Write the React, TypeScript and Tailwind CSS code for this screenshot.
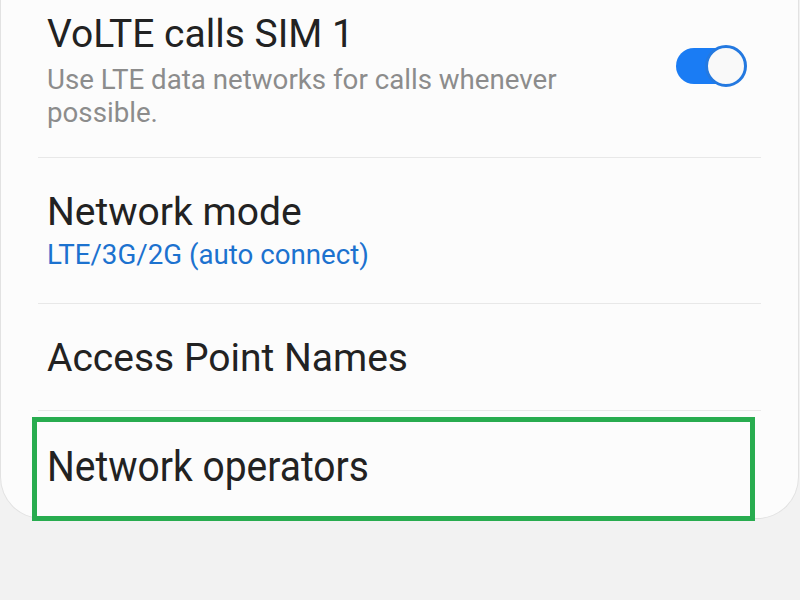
// Mobile network settings list with the last row highlighted
const font = { fontFamily: "Roboto, 'Noto Sans', sans-serif" };

function Toggle() {
  return (
    <div className="relative mt-[34px] h-[42px] w-[71px] shrink-0">
      <div className="absolute left-0 top-[3px] h-[36px] w-[60px] rounded-full bg-[#1a7cf4]" />
      <div className="absolute right-0 top-0 h-[42px] w-[42px] rounded-full border-[3px] border-[#2479e0] bg-[#f9f9f9]" />
    </div>
  );
}

export default function App() {
  return (
    <div className="relative h-[600px] w-[800px] overflow-hidden bg-[#f2f2f2]" style={font}>
      <div className="w-[799px] rounded-b-[42px] border border-t-0 border-[#e2e2e2] bg-[#fcfcfc] px-[37px]">
        {/* VoLTE */}
        <div className="flex items-start border-b border-[#e8e8e8] pb-[28px] pl-[9px] pr-[14px] pt-[11px]">
          <div className="w-[560px]">
            <p className="text-[39px] leading-[46px] text-[#222]">VoLTE calls SIM 1</p>
            <p className="mt-[6px] text-[27.7px] leading-[33px] text-[#8c8c8c]">
              Use LTE data networks for calls whenever possible.
            </p>
          </div>
          <div className="ml-auto">
            <Toggle />
          </div>
        </div>

        {/* network mode */}
        <div className="border-b border-[#e8e8e8] pb-[32px] pl-[9px] pt-[31px]">
          <p className="text-[39px] leading-[46px] text-[#222]">Network mode</p>
          <p className="mt-[3px] text-[27.7px] leading-[33px] text-[#1c72cf]">LTE/3G/2G (auto connect)</p>
        </div>

        {/* APN */}
        <div className="border-b border-[#e8e8e8] pb-[29px] pl-[9px] pt-[31px]">
          <p className="text-[39px] leading-[46px] text-[#222]">Access Point Names</p>
        </div>

        {/* operators */}
        <div className="pb-[28px] pl-[9px] pt-[33px]">
          <p className="inline-block origin-center scale-y-110 text-[39px] leading-[46px] text-[#222]">
            Network operators
          </p>
        </div>
      </div>

      {/* highlight */}
      <div className="absolute left-[32px] top-[417px] h-[104px] w-[723px] border-[5px] border-[#28ac4f]" />
    </div>
  );
}
